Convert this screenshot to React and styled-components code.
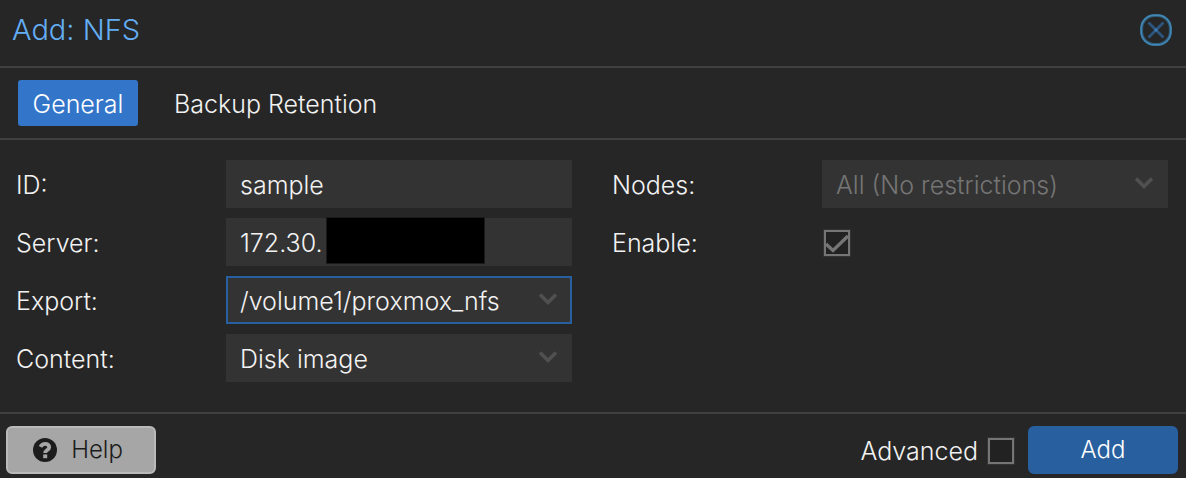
import React, { useState } from "react";
import styled, { createGlobalStyle, css } from "styled-components";

const GlobalStyle = createGlobalStyle`
  *, *::before, *::after { box-sizing: border-box; }
  html, body { margin: 0; background: #262626; }
  body, button, input, select {
    font-family: "Helvetica Neue", Inter, "Liberation Sans", sans-serif;
    font-weight: 300;
  }
`;

const Dialog = styled.main`
  background: #262626;
  color: #f2f2f2;
  font-size: 25px;
  line-height: 32px;
`;

const Header = styled.header`
  display: flex;
  align-items: center;
  justify-content: space-between;
  padding: 14px 14px 20px 12px;
  border-bottom: 2px solid #404040;
`;

const Title = styled.h1`
  margin: 0;
  font-size: 29px;
  font-weight: 300;
  line-height: 32px;
  color: #63aef5;
`;

const CloseButton = styled.button`
  display: grid;
  width: 32px;
  height: 32px;
  padding: 0;
  border: 0;
  background: none;
  cursor: pointer;
`;

const TabBar = styled.nav`
  display: flex;
  gap: 22px;
  padding: 12px 18px;
  border-bottom: 2px solid #404040;
`;

const Tab = styled.button`
  min-width: 120px;
  height: 46px;
  padding: 2px 14px 0;
  border: 0;
  border-radius: 3px;
  font-size: 25px;
  line-height: 32px;
  color: ${(p) => (p.$active ? "#ffffff" : "#f2f2f2")};
  background: ${(p) => (p.$active ? "#3375c9" : "transparent")};
  cursor: pointer;
`;

const Form = styled.form`
  display: grid;
  grid-template-columns: 1fr 1fr;
  gap: 40px;
  padding: 20px 18px 30px 16px;
`;

const Column = styled.div`
  display: flex;
  flex-direction: column;
  gap: 10px;
`;

const Row = styled.div`
  display: grid;
  grid-template-columns: 210px 1fr;
  align-items: center;
  height: 48px;
`;

const Label = styled.label`
  padding-top: 2px;
`;

const Field = styled.div`
  position: relative;
`;

const control = css`
  display: block;
  width: 100%;
  height: 48px;
  margin: 0;
  padding: 2px 12px 0;
  border: 2px solid ${(p) => (p.$focused ? "#285f9f" : "#333333")};
  border-radius: 0;
  outline: none;
  appearance: none;
  background: #333333;
  color: #f2f2f2;
  font-size: 25px;
`;

const TextInput = styled.input`
  ${control}
`;

const Select = styled.select`
  ${control}
  padding-right: 44px;
  &:disabled {
    color: #757575;
    opacity: 1;
  }
`;

const Redaction = styled.span`
  position: absolute;
  top: -1px;
  left: 100px;
  width: 159px;
  height: 47px;
  background: #000000;
  border: 1px solid #1a1a1a;
`;

const Arrow = styled.svg`
  position: absolute;
  top: 16px;
  right: 14px;
  width: 20px;
  height: 14px;
  pointer-events: none;
`;

const CheckWrap = styled.span`
  display: grid;
  width: 26px;
  height: 26px;
  margin-top: 2px;
  margin-left: ${(p) => (p.$indent ? "2px" : "0")};
  > * {
    grid-area: 1 / 1;
  }
`;

const CheckInput = styled.input`
  width: 26px;
  height: 26px;
  margin: 0;
  border: 2px solid #757575;
  outline: 1px solid #333333;
  appearance: none;
  background: #222222;
`;

const Tick = styled.svg`
  width: 26px;
  height: 26px;
  pointer-events: none;
`;

const Footer = styled.footer`
  display: flex;
  align-items: center;
  justify-content: space-between;
  padding: 12px 8px 4px 6px;
  border-top: 2px solid #404040;
`;

const Actions = styled.div`
  display: flex;
  align-items: center;
  gap: 14px;
`;

const Advanced = styled.div`
  display: flex;
  align-items: center;
  gap: 10px;
`;

const Button = styled.button`
  display: flex;
  align-items: center;
  justify-content: center;
  gap: 14px;
  width: 150px;
  height: 48px;
  padding: ${(p) => (p.$primary ? "0" : "0 6px 0 0")};
  border: 2px solid ${(p) => (p.$primary ? "#285f9f" : "#bababa")};
  border-radius: 6px;
  background: ${(p) => (p.$primary ? "#285f9f" : "#a6a6a6")};
  color: ${(p) => (p.$primary ? "#ffffff" : "#1c1c1c")};
  font-size: 24px;
  line-height: 32px;
  cursor: pointer;
`;

function Chevron() {
  return (
    <Arrow viewBox="0 0 20 14" aria-hidden="true">
      <path d="M2 2.5 L10 10.5 L18 2.5" fill="none" stroke="#505050" strokeWidth="3.6" />
    </Arrow>
  );
}

function Combo({ id, value, focused, disabled }) {
  return (
    <Field>
      <Select id={id} $focused={focused} disabled={disabled} defaultValue={value}>
        <option>{value}</option>
      </Select>
      <Chevron />
    </Field>
  );
}

function Checkbox({ id, initial, indent }) {
  const [checked, setChecked] = useState(initial);
  return (
    <CheckWrap $indent={indent}>
      <CheckInput
        id={id}
        type="checkbox"
        checked={checked}
        onChange={(e) => setChecked(e.target.checked)}
      />
      {checked && (
        <Tick viewBox="0 0 26 26" aria-hidden="true">
          <path d="M2 14 L9 20.5 L24 6" fill="none" stroke="#757575" strokeWidth="3.4" />
        </Tick>
      )}
    </CheckWrap>
  );
}

export default function App() {
  const [tab, setTab] = useState("General");
  return (
    <>
      <GlobalStyle />
      <Dialog>
        <Header>
          <Title>Add: NFS</Title>
          <CloseButton type="button" aria-label="Close">
            <svg width="32" height="32" viewBox="0 0 32 32" aria-hidden="true">
              <rect x="1.5" y="1.5" width="29" height="29" rx="13" fill="none" stroke="#2f5f7f" strokeWidth="3.2" />
              <rect x="1.2" y="1.2" width="29.6" height="29.6" rx="13" fill="none" stroke="#4489b5" strokeWidth="1.4" />
              <path d="M8.5 8.5 L23.5 23.5 M23.5 8.5 L8.5 23.5" fill="none" stroke="#2d567f" strokeWidth="2.8" />
              <circle cx="16" cy="16" r="1.7" fill="#3c78b4" />
            </svg>
          </CloseButton>
        </Header>
        <TabBar>
          {["General", "Backup Retention"].map((name) => (
            <Tab key={name} type="button" $active={tab === name} onClick={() => setTab(name)}>
              {name}
            </Tab>
          ))}
        </TabBar>
        <Form>
          <Column>
            <Row>
              <Label htmlFor="storage-id">ID:</Label>
              <TextInput id="storage-id" defaultValue="sample" />
            </Row>
            <Row>
              <Label htmlFor="server">Server:</Label>
              <Field>
                <TextInput id="server" defaultValue="172.30." />
                <Redaction />
              </Field>
            </Row>
            <Row>
              <Label htmlFor="export">Export:</Label>
              <Combo id="export" value="/volume1/proxmox_nfs" focused />
            </Row>
            <Row>
              <Label htmlFor="content">Content:</Label>
              <Combo id="content" value="Disk image" />
            </Row>
          </Column>
          <Column>
            <Row>
              <Label htmlFor="nodes">Nodes:</Label>
              <Combo id="nodes" value="All (No restrictions)" disabled />
            </Row>
            <Row>
              <Label htmlFor="enable">Enable:</Label>
              <Checkbox id="enable" initial indent />
            </Row>
          </Column>
        </Form>
        <Footer>
          <Button type="button">
            <svg width="24" height="24" viewBox="0 0 24 24" aria-hidden="true">
              <circle cx="12" cy="12" r="12" fill="#1c1c1c" />
              <path d="M7.5 8.8 C8.5 6.8 10 5.8 12.2 5.8 C14.5 5.8 16.2 7.2 16.2 9.2 C16.2 12 12.2 12 12.2 15" fill="none" stroke="#a6a6a6" strokeWidth="3.8" />
              <rect x="10.2" y="16.4" width="4" height="3.8" fill="#a6a6a6" />
            </svg>
            Help
          </Button>
          <Actions>
            <Advanced>
              <Label htmlFor="advanced">Advanced</Label>
              <Checkbox id="advanced" initial={false} />
            </Advanced>
            <Button type="button" $primary>
              Add
            </Button>
          </Actions>
        </Footer>
      </Dialog>
    </>
  );
}
